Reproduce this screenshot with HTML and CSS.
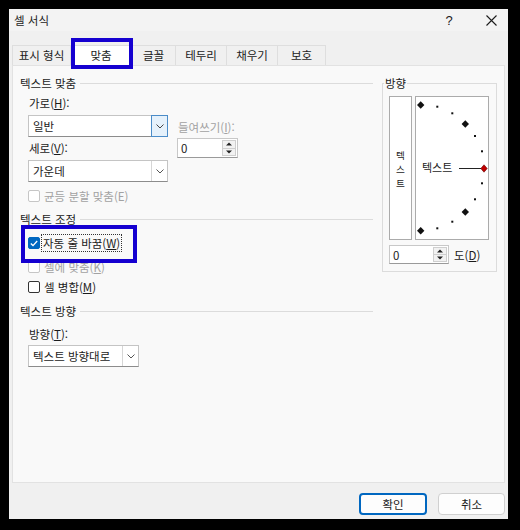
FILE: index.html
```html
<!DOCTYPE html>
<html lang="ko">
<head>
<meta charset="utf-8">
<title>셀 서식</title>
<link rel="stylesheet" href="styles.css">
</head>
<body>
<div class="dialog">
  <div class="titlebar">
    <span class="title">셀 서식</span>
    <span class="help">?</span>
    <span class="close"><svg width="11" height="11" viewBox="0 0 11 11"><path d="M0.5 0.5L10.5 10.5M10.5 0.5L0.5 10.5" stroke="#1b1b1b" stroke-width="1.1" fill="none"/></svg></span>
  </div>

  <div class="tabs">
    <div class="tab tab-first tab-w59">표시 형식</div>
    <div class="tab tab-active tab-w61">맞춤</div>
    <div class="tab tab-w44">글꼴</div>
    <div class="tab tab-w51">테두리</div>
    <div class="tab tab-w51">채우기</div>
    <div class="tab tab-w48">보호</div>
  </div>

  <div class="panel">
    <div class="left">
      <div class="heading"><span>텍스트 맞춤</span></div>
      <div class="indent">
        <div class="align-row">
          <div class="align-col">
            <div class="label">가로(<u>H</u>):</div>
            <div class="select sel-wide sel-gap">
              <span class="val">일반</span>
              <span class="drop drop-focus"><svg width="8" height="5" viewBox="0 0 8 5"><path d="M0.5 0.5L4 4L7.5 0.5" stroke="#444" fill="none"/></svg></span>
            </div>
            <div class="label label-gap3">세로(<u>V</u>):</div>
            <div class="select sel-wide sel-gap">
              <span class="val">가운데</span>
              <span class="drop"><svg width="8" height="5" viewBox="0 0 8 5"><path d="M0.5 0.5L4 4L7.5 0.5" stroke="#555" fill="none"/></svg></span>
            </div>
          </div>
          <div class="indent-col">
            <div class="label disabled">들여쓰기(<u>I</u>):</div>
            <div class="spin spin-indent">
              <span class="val">0</span>
              <span class="spin-btns">
                <span class="sb"><svg width="6" height="4" viewBox="0 0 6 4"><path d="M0 3.5L3 0.5L6 3.5Z" fill="#222"/></svg></span>
                <span class="sb"><svg width="6" height="4" viewBox="0 0 6 4"><path d="M0 0.5L3 3.5L6 0.5Z" fill="#222"/></svg></span>
              </span>
            </div>
          </div>
        </div>
        <div class="check disabled check-distribute"><span class="box"></span><span class="ctext">균등 분할 맞춤(E)</span></div>
      </div>

      <div class="heading heading-gap7"><span>텍스트 조정</span></div>
      <div class="indent">
        <div class="check check-wrap"><span class="box box-checked"><svg width="8" height="7" viewBox="0 0 8 7"><path d="M0.8 3.6L3 5.6L7.2 1" stroke="#fff" stroke-width="1.3" fill="none"/></svg></span><span class="ctext focus-rect">자동 줄 바꿈(<u>W</u>)</span></div>
        <div class="check disabled check-shrink"><span class="box"></span><span class="ctext">셀에 맞춤(<u>K</u>)</span></div>
        <div class="check check-merge"><span class="box"></span><span class="ctext">셀 병합(<u>M</u>)</span></div>
      </div>

      <div class="heading heading-gap8"><span>텍스트 방향</span></div>
      <div class="indent">
        <div class="label label-gap7">방향(<u>T</u>):</div>
        <div class="select sel-dir label-gap3">
          <span class="val">텍스트 방향대로</span>
          <span class="drop"><svg width="8" height="5" viewBox="0 0 8 5"><path d="M0.5 0.5L4 4L7.5 0.5" stroke="#555" fill="none"/></svg></span>
        </div>
      </div>
    </div>

    <div class="orient">
      <div class="orient-label">방향</div>
      <div class="orient-row">
        <div class="vbox"><span>텍</span><span>스</span><span>트</span></div>
        <div class="dial">
          <svg width="72" height="142" viewBox="0 0 72 142">
            <g fill="#111">
              <path d="M4.7 4.3L8.4 8L4.7 11.7L1 8Z"/>
              <path d="M49.3 23.3L53 27L49.3 30.7L45.6 27Z"/>
              <path d="M49.3 111.3L53 115L49.3 118.7L45.6 115Z"/>
              <path d="M4.7 130L8.4 133.7L4.7 137.4L1 133.7Z"/>
              <rect x="20.3" y="8.7" width="2" height="2"/>
              <rect x="35.3" y="15.3" width="2" height="2"/>
              <rect x="58" y="38" width="2" height="2"/>
              <rect x="65" y="53.3" width="2" height="2"/>
              <rect x="65" y="85.3" width="2" height="2"/>
              <rect x="58" y="101.3" width="2" height="2"/>
              <rect x="35.3" y="123.7" width="2" height="2"/>
              <rect x="20.3" y="130.3" width="2" height="2"/>
            </g>
            <text x="6" y="75" font-family="Noto Sans CJK KR, sans-serif" font-size="11" fill="#1b1b1b">텍스트</text>
            <path d="M43 71.5H65" stroke="#222" stroke-width="1"/>
            <path d="M68 67.8L71.2 71.5L68 75.2L64.8 71.5Z" fill="#c00000" stroke="#600" stroke-width="0.6"/>
          </svg>
        </div>
      </div>
      <div class="deg-row">
        <div class="spin spin-deg">
          <span class="val">0</span>
          <span class="spin-btns">
            <span class="sb"><svg width="6" height="4" viewBox="0 0 6 4"><path d="M0 3.5L3 0.5L6 3.5Z" fill="#222"/></svg></span>
            <span class="sb"><svg width="6" height="4" viewBox="0 0 6 4"><path d="M0 0.5L3 3.5L6 0.5Z" fill="#222"/></svg></span>
          </span>
        </div>
        <span class="deg-label">도(<u>D</u>)</span>
      </div>
    </div>
  </div>

  <div class="footer">
    <button class="btn btn-ok">확인</button>
    <button class="btn btn-cancel">취소</button>
  </div>

  <div class="hl hl-tab"></div>
  <div class="hl hl-wrap"></div>
</div>
</body>
</html>
```

FILE: styles.css
```css
* { box-sizing: border-box; }
html, body { margin: 0; padding: 0; }
body {
  background: #000;
  width: 520px;
  height: 530px;
  overflow: hidden;
  font-family: "Noto Sans CJK KR", "Malgun Gothic", sans-serif;
  font-size: 11.5px;
  color: #1b1b1b;
}
u { text-decoration: underline; text-underline-offset: 1px; }

.dialog {
  position: relative;
  margin: 9px 0 0 9px;
  width: 499px;
  height: 510px;
  background: #f0f0f0;
}

/* title bar */
.titlebar {
  display: flex;
  align-items: center;
  height: 22px;
  padding-left: 5px;
  padding-right: 7px;
  background: #f3f3f3;
}
.title { flex: 1; line-height: 22px; }
.help, .close {
  width: 20px;
  height: 22px;
  display: flex;
  align-items: center;
  justify-content: center;
}
.help { font-family: "Liberation Sans", sans-serif; font-size: 13px; }
.close { margin-left: 22px; }

/* tabs */
.tabs {
  display: flex;
  margin-top: 14px;
  padding-left: 3px;
  height: 20px;
}
.tab {
  height: 20px;
  line-height: 19px;
  text-align: center;
  border-top: 1px solid #dedede;
  border-right: 1px solid #dedede;
  background: #f0f0f0;
}
.tab-first { border-left: 1px solid #dedede; }
.tab-active { background: #ffffff; }
.tab-w59 { width: 59px; }
.tab-w61 { width: 61px; }
.tab-w44 { width: 44px; }
.tab-w51 { width: 51px; }
.tab-w48 { width: 48px; }

/* panel */
.panel {
  display: flex;
  margin: 0 3px;
  height: 418px;
  background: #f9f9f9;
  border: 1px solid #e2e2e2;
  padding-left: 7px;
}
.left {
  width: 353px;
  padding-top: 9px;
}
.heading {
  display: flex;
  align-items: center;
  height: 16px;
  line-height: 16px;
}
.heading::after {
  content: "";
  flex: 1;
  margin-left: 4px;
  border-top: 1px solid #dcdcdc;
}
.heading-gap7 { margin-top: 7px; }
.heading-gap8 { margin-top: 8px; }

.indent { padding-left: 8px; }
.label {
  height: 16px;
  line-height: 16px;
  padding-left: 1px;
}
.label-gap3 { margin-top: 3px; }
.label-gap7 { margin-top: 7px; }
.disabled { color: #a2a2a2; }

.align-row { display: flex; margin-top: 4px; }
.align-col { width: 140px; }
.indent-col { margin-left: 9px; padding-top: 24px; }

/* select */
.select {
  display: flex;
  height: 22px;
  background: #fff;
  border: 1px solid #c4c4c4;
  border-bottom-color: #8c8c8c;
}
.sel-gap { margin-top: 4px; }
.sel-wide { width: 140px; }
.sel-dir { width: 111px; }
.select .val {
  flex: 1;
  padding-left: 4px;
  line-height: 20px;
  white-space: nowrap;
}
.drop {
  width: 16px;
  display: flex;
  align-items: center;
  justify-content: center;
  border-left: 1px solid #d6d6d6;
}
.drop-focus {
  width: 17px;
  margin: -1px -1px -1px 0;
  border: 1px solid #4b8cc8;
  background: #e5f1fb;
}

/* spinner */
.spin {
  display: flex;
  background: #fff;
  border: 1px solid #c8c8c8;
  border-bottom-color: #9a9a9a;
}
.spin .val { flex: 1; padding-left: 3px; line-height: 18px; }
.spin-indent { width: 61px; height: 20px; margin-top: 3px; }
.spin-deg { width: 60px; height: 19px; }
.spin-btns {
  display: flex;
  flex-direction: column;
  width: 14px;
  margin: 1px 1px 1px 0;
}
.sb {
  flex: 1;
  display: flex;
  align-items: center;
  justify-content: center;
  background: #f2f2f2;
  border: 1px solid #cfcfcf;
}
.sb + .sb { border-top: none; }

/* checkboxes */
.check {
  display: flex;
  align-items: center;
  height: 16px;
  line-height: 16px;
}
.box {
  width: 12px;
  height: 12px;
  border: 1px solid #333;
  border-radius: 2px;
  background: #fff;
  margin-right: 4px;
  display: flex;
  align-items: center;
  justify-content: center;
}
.check.disabled .box { border-color: #c6c6c6; }
.box-checked { background: #0067c0; border-color: #0067c0; }
.check-distribute { margin-top: 6px; }
.check-wrap { margin-top: 8px; }
.check-wrap .box { margin-right: 1px; }
.focus-rect {
  border: 1px dotted #333;
  padding: 0 1px;
  height: 18px;
  line-height: 16px;
}
.check-shrink { margin-top: 8px; }
.check-merge { margin-top: 4px; }

/* orientation group */
.orient {
  width: 115px;
  height: 189px;
  margin-top: 17px;
  margin-left: 9px;
  border: 1px solid #dcdcdc;
}
.orient-label {
  width: fit-content;
  margin-top: -9px;
  margin-left: 1px;
  padding: 0 1px;
  height: 16px;
  line-height: 16px;
  background: #f9f9f9;
}
.orient-row {
  display: flex;
  margin-top: 5px;
  padding-left: 6px;
  gap: 3px;
}
.vbox {
  width: 23px;
  height: 144px;
  border: 1px solid #ababab;
  background: #fff;
  display: flex;
  flex-direction: column;
  justify-content: center;
  align-items: center;
  font-size: 9.6px;
  line-height: 14px;
  padding-top: 1px;
}
.vbox span { display: block; height: 14px; }
.dial {
  width: 74px;
  height: 144px;
  border: 1px solid #ababab;
  background: #fff;
}
.dial svg { display: block; }
.deg-row {
  display: flex;
  align-items: center;
  margin-top: 5px;
  padding-left: 6px;
}
.deg-label { margin-left: 5px; }

/* footer */
.footer {
  display: flex;
  justify-content: flex-end;
  gap: 11px;
  padding: 10px 3px 0 0;
}
.btn {
  height: 22px;
  font-family: "Noto Sans CJK KR", sans-serif;
  font-size: 11.5px;
  color: #1b1b1b;
  background: #fdfdfd;
  border-radius: 4px;
  padding: 0;
  line-height: 18px;
}
.btn-ok { width: 68px; border: 2px solid #0067c0; }
.btn-cancel { width: 67px; border: 1px solid #d0d0d0; }

/* annotation highlights */
.hl {
  position: absolute;
  border: 4px solid #1500d0;
}
.hl-tab { left: 62px; top: 29px; width: 62px; height: 31px; }
.hl-wrap { left: 12px; top: 216px; width: 116px; height: 38px; }
```
